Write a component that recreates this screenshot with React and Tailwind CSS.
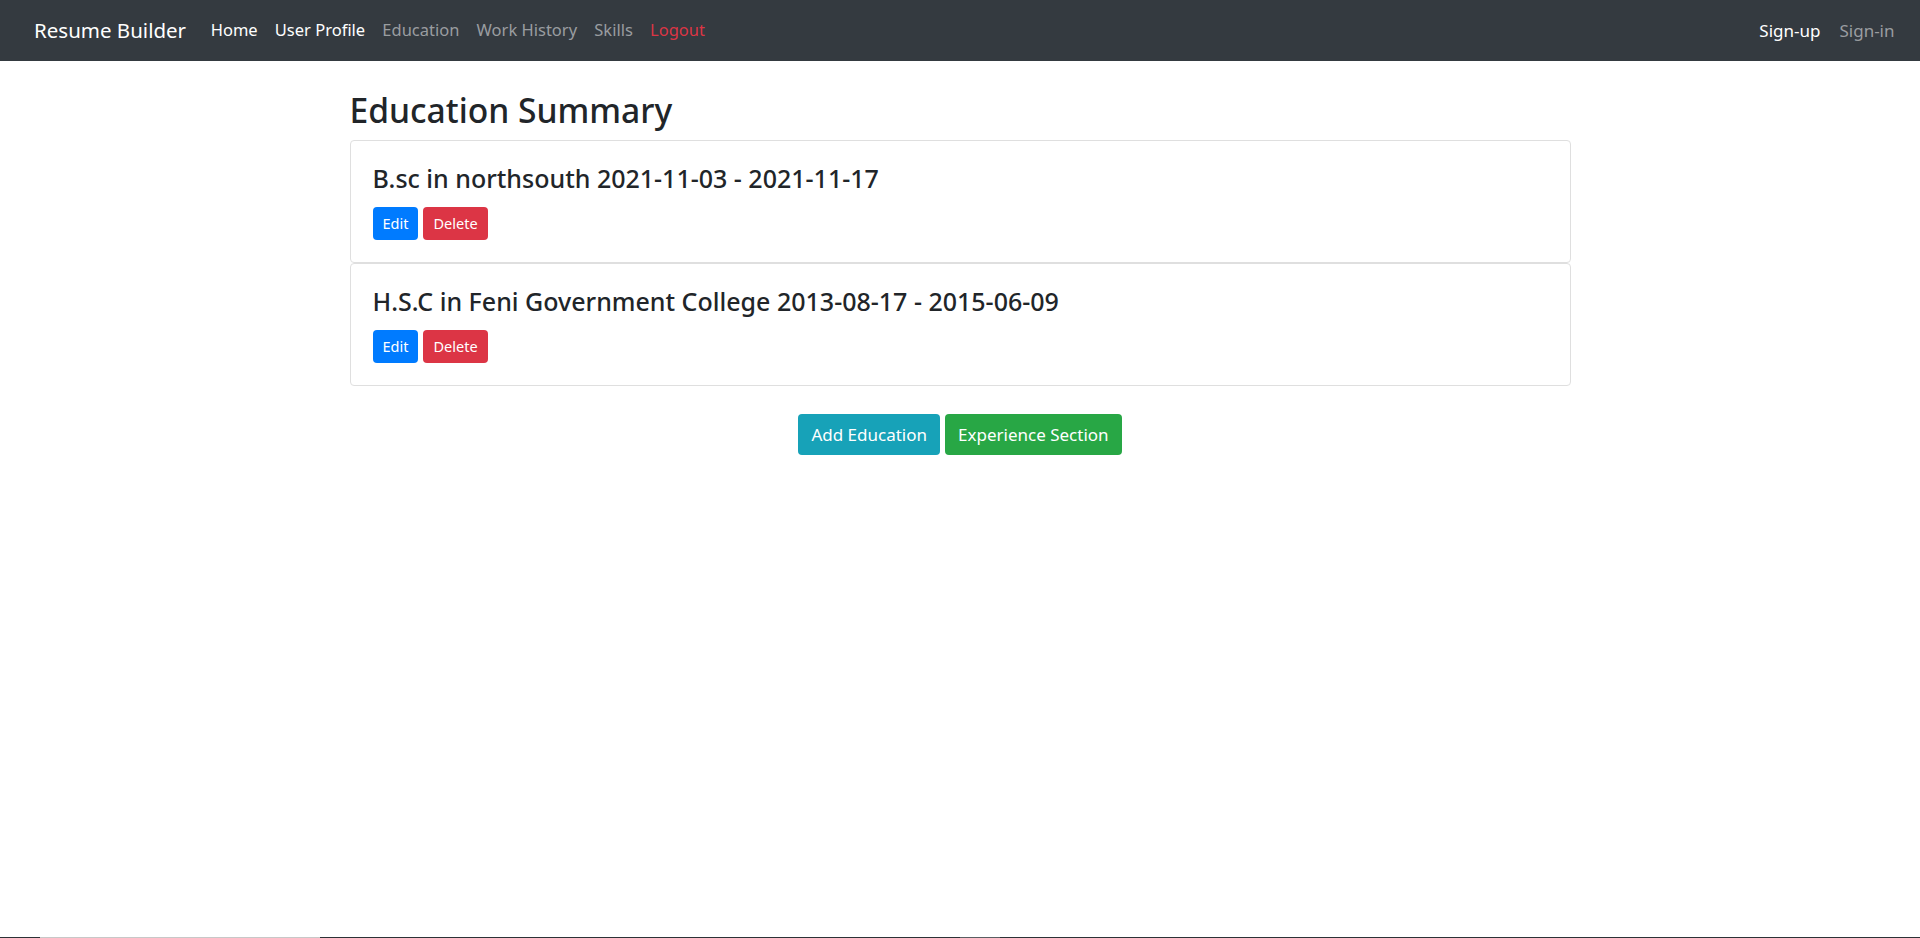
const font = { fontFamily: '"Noto Sans", "Open Sans", sans-serif' }

const navLinks = [
  { label: 'Home', cls: 'text-white' },
  { label: 'User Profile', cls: 'text-white' },
  { label: 'Education', cls: 'text-[#9a9da0]' },
  { label: 'Work History', cls: 'text-[#9a9da0]' },
  { label: 'Skills', cls: 'text-[#9a9da0]' },
  { label: 'Logout', cls: 'text-[#dc3545]' },
]

const entries = [
  { title: 'B.sc in northsouth 2021-11-03 - 2021-11-17' },
  { title: 'H.S.C in Feni Government College 2013-08-17 - 2015-06-09' },
]

function EducationCard({ entry }) {
  return (
    <div className="border border-[#dfdfdf] rounded-[4px] bg-white px-[22px] pt-[21px] pb-[22px]">
      <h4 className="text-[25px] leading-[32px] font-medium text-[#212529] mb-[13px]">{entry.title}</h4>
      <div className="flex gap-[5px]">
        <button className="h-[33px] px-[10px] rounded-[4px] bg-[#007bff] text-white text-[14.5px]">Edit</button>
        <button className="h-[33px] px-[10px] rounded-[4px] bg-[#dc3545] text-white text-[14.5px]">Delete</button>
      </div>
    </div>
  )
}

export default function App() {
  return (
    <div className="min-h-screen flex flex-col bg-white" style={font}>
      {/* Navbar */}
      <nav className="h-[61px] bg-[#343a40] flex items-center pl-[34px] pr-[16px] text-[16.5px]">
        <span className="text-white text-[20.5px] mr-[16px]">Resume Builder</span>
        <div className="flex">
          {navLinks.map(l => (
            <a key={l.label} href="#" className={`px-[8.6px] ${l.cls}`}>{l.label}</a>
          ))}
        </div>
        <div className="ml-auto flex text-[17px]">
          <a href="#" className="px-[9.5px] text-white">Sign-up</a>
          <a href="#" className="px-[9.5px] text-[#9a9da0]">Sign-in</a>
        </div>
      </nav>

      {/* Content */}
      <main className="w-[1221px] mx-auto pt-[28px]">
        <h2 className="text-[33.6px] leading-[42px] font-medium text-[#212529] mb-[9px]">Education Summary</h2>
        <div className="flex flex-col">
          {entries.map(e => <EducationCard key={e.title} entry={e} />)}
        </div>
        <div className="flex justify-center gap-[5px] mt-[28px]">
          <button className="h-[41px] px-[13px] rounded-[4px] bg-[#17a2b8] text-white text-[17px]">Add Education</button>
          <button className="h-[41px] px-[13px] rounded-[4px] bg-[#28a745] text-white text-[17px]">Experience Section</button>
        </div>
      </main>

      <div className="mt-auto h-[1px] flex">
        <div className="w-[40px] bg-[#2d3236]" />
        <div className="w-[280px] bg-[#c8c8c8]" />
        <div className="w-[640px] bg-[#2d3236]" />
        <div className="w-[40px] bg-[#5a5e62]" />
        <div className="flex-1 bg-[#2d3236]" />
      </div>
    </div>
  )
}
